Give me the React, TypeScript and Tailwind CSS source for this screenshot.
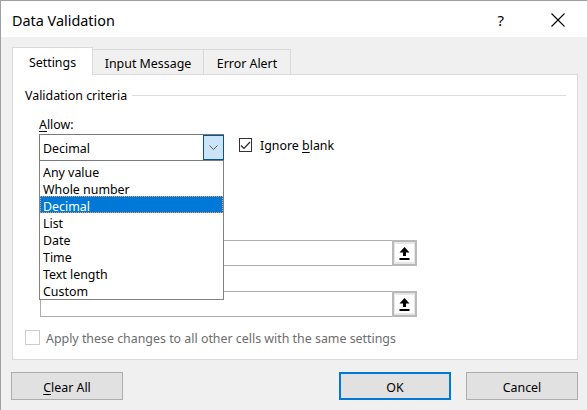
import React from 'react'

const font = { fontFamily: '"Noto Sans", "Open Sans", sans-serif' }

const options = ['Any value', 'Whole number', 'Decimal', 'List', 'Date', 'Time', 'Text length', 'Custom']

// Up-arrow for the range picker buttons
function RefIcon() {
  return (
    <svg width="11" height="13" viewBox="0 0 11 13">
      <path d="M5.5 0 L10.5 5.5 L7 5.5 L7 9 L4 9 L4 5.5 L0.5 5.5 Z" fill="#000" />
      <rect x="0.5" y="11" width="10" height="2" fill="#000" />
    </svg>
  )
}

function RefEdit() {
  return (
    <div className="flex h-[26px] w-[377px]">
      <div className="flex-1 border border-[#adadad] border-r-0 bg-white" />
      <div className="flex w-[25px] items-center justify-center border-2 border-[#b9b9b9] bg-[#e6e6e6]">
        <div className="flex h-[18px] w-[19px] items-center justify-center bg-white">
          <RefIcon />
        </div>
      </div>
    </div>
  )
}

function DialogButton({ children, primary, className }: { children: React.ReactNode; primary?: boolean; className?: string }) {
  return (
    <button
      className={`flex h-[28px] w-[112px] items-center justify-center bg-[#e1e1e1] text-[12.4px] text-black ${
        primary ? 'border-2 border-[#0078d7]' : 'border border-[#adadad]'
      } ${className || ''}`}
    >
      <span className="translate-y-[2px]">{children}</span>
    </button>
  )
}

export default function App() {
  return (
    <div style={font} className="flex h-[410px] w-[587px] flex-col overflow-hidden border-l border-t border-[#a0a0a0] bg-[#f0f0f0] text-[12.4px] text-black">
      {/* title bar */}
      <div className="flex h-[36px] items-center bg-white pl-[11px]">
        <span className="translate-y-[2px] text-[14.4px] leading-none">Data Validation</span>
        <span className="ml-auto mr-[47px] translate-y-[1px] text-[15px] leading-none">?</span>
        <svg className="mr-[22px] translate-y-[1px]" width="14" height="14" viewBox="0 0 14 14">
          <path d="M0.5 0.5 L13.5 13.5 M13.5 0.5 L0.5 13.5" stroke="#000" strokeWidth="1.1" />
        </svg>
      </div>

      <div className="flex flex-col pl-[11px] pr-[9px] pt-[10px]">
        {/* tabs */}
        <div className="flex h-[27px] items-end">
          <div className="relative z-10 -mb-px flex h-[28px] w-[81px] items-center justify-center border border-b-0 border-[#d9d9d9] bg-white pt-[4px]">
            Settings
          </div>
          <div className="flex h-[25px] w-[111px] items-center justify-center border-r border-t border-[#d9d9d9] pt-[4px]">
            Input Message
          </div>
          <div className="flex h-[25px] w-[87px] items-center justify-center border-r border-t border-[#d9d9d9] pt-[4px]">
            Error Alert
          </div>
        </div>

        {/* settings panel */}
        <div className="relative flex h-[286px] flex-col border border-[#d9d9d9] bg-white pl-[12px]">
          <div className="mt-[12px] flex items-center pr-[11px]">
            <span className="translate-y-[1px] leading-[16px]">Validation criteria</span>
            <div className="ml-[5px] h-px flex-1 bg-[#dcdcdc]" />
          </div>

          <div className="ml-[14px] mt-[12px] translate-y-[2px] leading-[16px]">
            <span className="underline underline-offset-2">A</span>llow:
          </div>

          <div className="ml-[14px] mt-[3px] flex items-start">
            <div className="flex h-[27px] w-[185px] border border-[#7a7a7a] border-r-0 bg-white">
              <span className="flex flex-1 translate-y-[2px] items-center pl-[3px]">Decimal</span>
              <div className="flex w-[21px] items-center justify-center border border-[#005499] bg-[#cce4f7]">
                <svg width="9" height="6" viewBox="0 0 9 6">
                  <path d="M0.5 0.5 L4.5 4.5 L8.5 0.5" stroke="#4a5a6a" strokeWidth="1" fill="none" />
                </svg>
              </div>
            </div>
            <div className="ml-[15px] mt-[3px] flex items-center">
              <div className="flex h-[14px] w-[13px] items-center justify-center border border-[#333]">
                <svg width="11" height="9" viewBox="0 0 11 9">
                  <path d="M1 4.5 L4 7.5 L10 1" stroke="#222" strokeWidth="1.2" fill="none" />
                </svg>
              </div>
              <span className="ml-[8px] translate-y-[1px] leading-[16px]">
                Ignore <span className="underline underline-offset-2">b</span>lank
              </span>
            </div>
          </div>

          <div className="ml-[15px] mt-[79px]">
            <RefEdit />
          </div>
          <div className="ml-[15px] mt-[25px]">
            <RefEdit />
          </div>

          <div className="mt-[12px] flex items-center text-[#6d6d6d]">
            <div className="h-[15px] w-[15px] border border-[#cccccc] bg-white" />
            <span className="ml-[6px] translate-y-[2px] leading-[16px]">
              Apply these changes to all other cells with the same settings
            </span>
          </div>

          {/* open dropdown list */}
          <div className="absolute left-[26px] top-[86px] z-20 flex w-[185px] flex-col border border-[#828282] border-t-0 bg-white py-px">
            {options.map((o) => (
              <div
                key={o}
                className={`h-[17px] pl-[3px] ${
                  o === 'Decimal' ? 'bg-[#0078d7] text-white outline outline-1 -outline-offset-1 outline-dotted outline-[#f0a050]' : ''
                }`}
              >
                <span className="block translate-y-[2px] leading-[17px]">{o}</span>
              </div>
            ))}
          </div>
        </div>

        {/* buttons */}
        <div className="mt-[12px] flex">
          <DialogButton className="-ml-px">
            <span className="underline underline-offset-2">C</span>lear All
          </DialogButton>
          <DialogButton primary className="ml-auto">
            OK
          </DialogButton>
          <DialogButton className="ml-[15px]">Cancel</DialogButton>
        </div>
      </div>
    </div>
  )
}
